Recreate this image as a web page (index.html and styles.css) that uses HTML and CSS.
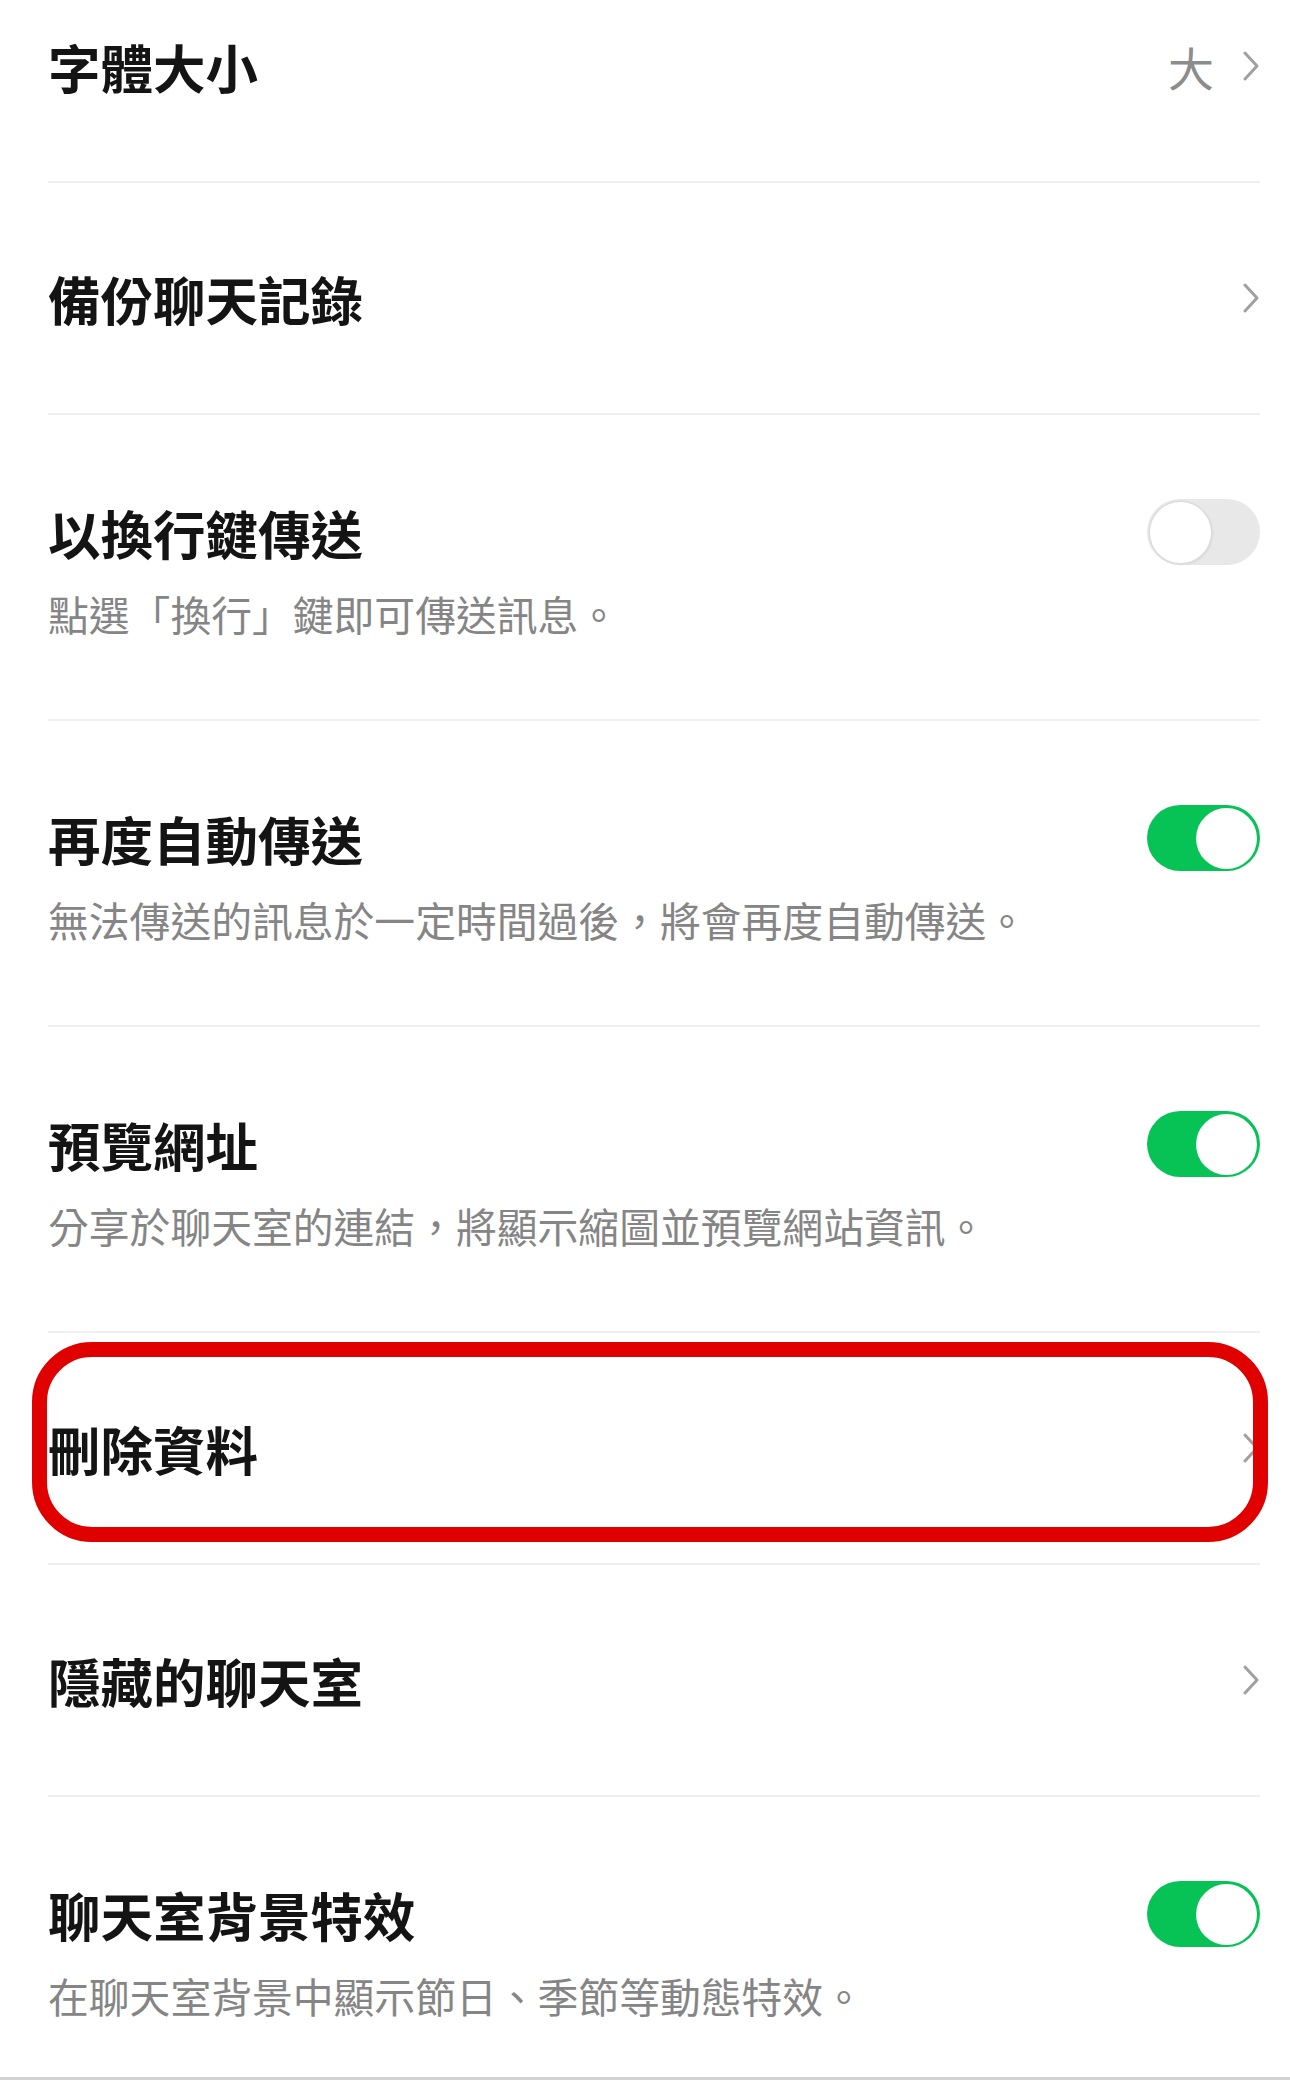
FILE: index.html
```html
<!DOCTYPE html>
<html lang="zh-Hant">
<head>
<meta charset="utf-8">
<title>聊天設定</title>
<link rel="stylesheet" href="styles.css">
</head>
<body>
<div class="page">
  <div class="list">
    <div class="row row-first">
      <div class="head">
        <span class="title">字體大小</span>
        <span class="trail"><span class="value">大</span><svg class="chev" viewBox="0 0 18 30" aria-hidden="true"><path d="M3 2 L15 15 L3 28"/></svg></span>
      </div>
    </div>
    <div class="row">
      <div class="head">
        <span class="title">備份聊天記錄</span>
        <span class="trail"><svg class="chev" viewBox="0 0 18 30" aria-hidden="true"><path d="M3 2 L15 15 L3 28"/></svg></span>
      </div>
    </div>
    <div class="row row-sub">
      <div class="head">
        <span class="title">以換行鍵傳送</span>
        <span class="toggle"><span class="knob"></span></span>
      </div>
      <div class="sub">點選「換行」鍵即可傳送訊息。</div>
    </div>
    <div class="row row-sub">
      <div class="head">
        <span class="title">再度自動傳送</span>
        <span class="toggle on"><span class="knob"></span></span>
      </div>
      <div class="sub">無法傳送的訊息於一定時間過後，將會再度自動傳送。</div>
    </div>
    <div class="row row-sub">
      <div class="head">
        <span class="title">預覽網址</span>
        <span class="toggle on"><span class="knob"></span></span>
      </div>
      <div class="sub">分享於聊天室的連結，將顯示縮圖並預覽網站資訊。</div>
    </div>
    <div class="row row-marked">
      <div class="head">
        <span class="title">刪除資料</span>
        <span class="trail"><svg class="chev" viewBox="0 0 18 30" aria-hidden="true"><path d="M3 2 L15 15 L3 28"/></svg></span>
      </div>
      <div class="mark"></div>
    </div>
    <div class="row">
      <div class="head">
        <span class="title">隱藏的聊天室</span>
        <span class="trail"><svg class="chev" viewBox="0 0 18 30" aria-hidden="true"><path d="M3 2 L15 15 L3 28"/></svg></span>
      </div>
    </div>
    <div class="row row-sub">
      <div class="head">
        <span class="title">聊天室背景特效</span>
        <span class="toggle on"><span class="knob"></span></span>
      </div>
      <div class="sub">在聊天室背景中顯示節日、季節等動態特效。</div>
    </div>
  </div>
  <div class="bottom-edge"></div>
</div>
</body>
</html>
```
FILE: styles.css
```css
html, body {
  margin: 0;
  padding: 0;
  background: #ffffff;
}

body {
  font-family: "Noto Sans CJK TC", "Noto Sans", "Liberation Sans", sans-serif;
  color: #111111;
}

.page {
  height: 2080px;
  display: flex;
  flex-direction: column;
  overflow: hidden;
}

.list {
  flex: 1;
  min-height: 0;
  overflow: hidden;
  padding: 0 30px 0 48px;
  display: flex;
  flex-direction: column;
}

.row {
  flex: none;
  padding: 82px 0;
  border-bottom: 2px solid #f0f0f0;
}

.row-first {
  margin-top: -49px;
}

.row-sub {
  padding: 84px 0 80px;
}

.row-marked {
  position: relative;
}

.head {
  display: flex;
  align-items: center;
  justify-content: space-between;
  height: 66px;
}

.title {
  font-size: 52.5px;
  line-height: 66px;
  font-weight: 700;
  color: #141414;
  white-space: nowrap;
}

.trail {
  display: flex;
  align-items: center;
  gap: 28px;
}

.value {
  font-size: 46px;
  line-height: 66px;
  font-weight: 400;
  color: #8c8c8c;
}

.chev {
  width: 18px;
  height: 30px;
  display: block;
}

.chev path {
  fill: none;
  stroke: #a0a0a0;
  stroke-width: 3;
  stroke-linecap: round;
  stroke-linejoin: round;
}

.sub {
  margin-top: 24px;
  font-size: 40.8px;
  line-height: 50px;
  color: #858585;
  white-space: nowrap;
}

.toggle {
  width: 113px;
  height: 66px;
  border-radius: 33px;
  background: #e8e8e8;
  display: flex;
  align-items: center;
  padding: 0 3px;
  box-sizing: border-box;
  flex: none;
}

.toggle .knob {
  width: 61px;
  height: 61px;
  border-radius: 50%;
  background: #ffffff;
  box-shadow: 0 0 0 1.5px #dcdcdc, 1px 1px 3px rgba(0, 0, 0, 0.12);
}

.toggle.on {
  background: #07c356;
  justify-content: flex-end;
}

.toggle.on .knob {
  box-shadow: none;
}

.mark {
  position: absolute;
  top: 9px;
  bottom: 21px;
  left: -16px;
  right: -8px;
  border: 15px solid #e00000;
  border-radius: 60px;
  pointer-events: none;
}

.bottom-edge {
  flex: none;
  height: 3px;
  background: #d2d2d2;
}
```
